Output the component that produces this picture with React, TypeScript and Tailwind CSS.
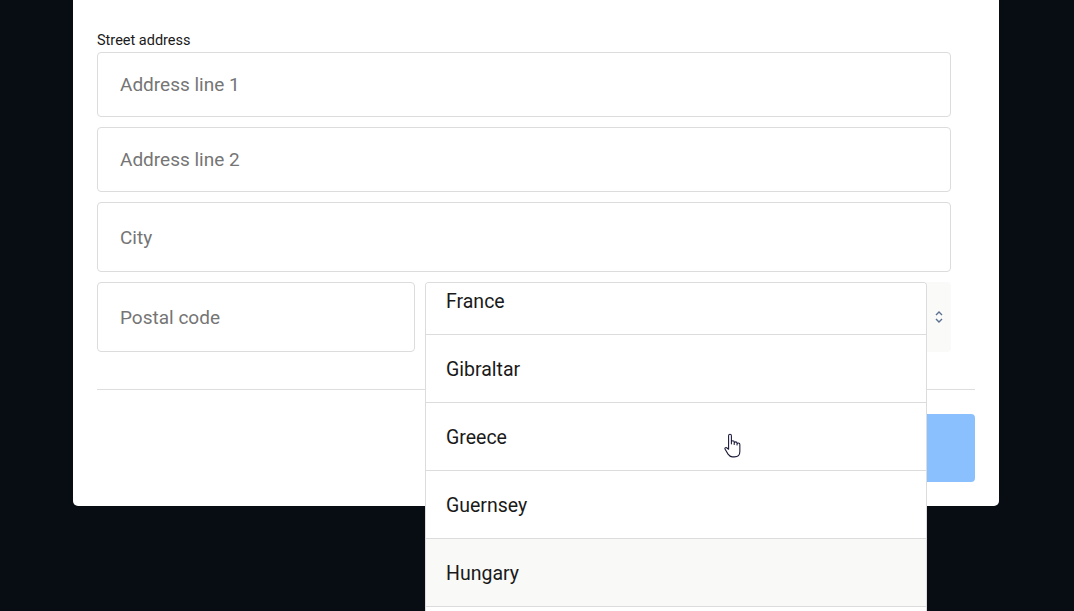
const countries = ['France', 'Gibraltar', 'Greece', 'Guernsey', 'Hungary'];

const Field = ({ placeholder, h }: { placeholder: string; h: string }) => (
  <div
    className={`${h} flex items-center rounded border border-[#dcdcdc] bg-white px-[22px] pt-[2px] text-[19px] text-[#757575]`}
  >
    {placeholder}
  </div>
);

const ChevronUpDown = () => (
  <svg width="10" height="14" viewBox="0 0 10 14" fill="none" stroke="#5b6f8f" strokeWidth="1.4">
    <path d="M2 5 L5 2 L8 5" />
    <path d="M2 9 L5 12 L8 9" />
  </svg>
);

const HandCursor = () => (
  <svg width="20" height="26" viewBox="0 0 18 24" className="absolute left-[724px] top-[433px]">
    <path
      d="M4 2.5 a1.3 1.3 0 0 1 2.6 0 V10 V8.5 a1.3 1.3 0 0 1 2.6 0 V10.5 V9.5 a1.3 1.3 0 0 1 2.6 0 V11 V10.5 a1.3 1.3 0 0 1 2.6 0 V17 c0 3 -2 5 -5 5 H7.5 c-2 0 -3 -1 -4 -2.5 L0.8 15 c-0.6 -1 0.4 -2 1.4 -1.4 L4 15 Z"
      fill="white"
      stroke="#1b1b3a"
      strokeWidth="1"
      strokeLinejoin="round"
    />
  </svg>
);

export default function App() {
  return (
    <div className="relative h-[611px] w-full overflow-hidden bg-[#080d14] font-['Roboto',sans-serif]">
      <div className="ml-[73px] w-[926px] rounded-b-[5px] bg-white px-6 pb-6 pt-[32px]">
        <div className="pr-6">
          <div className="mb-[2px] text-[14.5px] leading-[18px] text-[#1a1a1a]">Street address</div>
          <div className="flex flex-col gap-[10px]">
            <Field placeholder="Address line 1" h="h-[65px]" />
            <Field placeholder="Address line 2" h="h-[65px]" />
            <Field placeholder="City" h="h-[70px]" />
            <div className="flex gap-[10px]">
              <div className="w-[318px]">
                <Field placeholder="Postal code" h="h-[70px]" />
              </div>
              <div className="flex h-[70px] flex-1 items-center justify-end rounded bg-[#fafaf9] pr-[7px]">
                <ChevronUpDown />
              </div>
            </div>
          </div>
        </div>
        <div className="mt-[37px] border-t border-[#dedede]" />
        <div className="mt-6 flex justify-end">
          <div className="h-[68px] w-[430px] rounded bg-[#8ac0fe]" />
        </div>
      </div>

      <div className="absolute left-[425px] top-[282px] w-[502px] overflow-hidden rounded-t border border-b-0 border-[#dcdcdc] bg-white">
        <div className="-mt-[16px]">
          {countries.map((c) => (
            <div
              key={c}
              className={`flex h-[68px] items-center border-b border-[#dcdcdc] px-5 pt-[2px] text-[19.5px] text-[#1a1a1a] ${
                c === 'Hungary' ? 'bg-[#f9f9f8]' : 'bg-white'
              }`}
            >
              {c}
            </div>
          ))}
          <div className="h-[20px] bg-white" />
        </div>
      </div>

      <HandCursor />
    </div>
  );
}
